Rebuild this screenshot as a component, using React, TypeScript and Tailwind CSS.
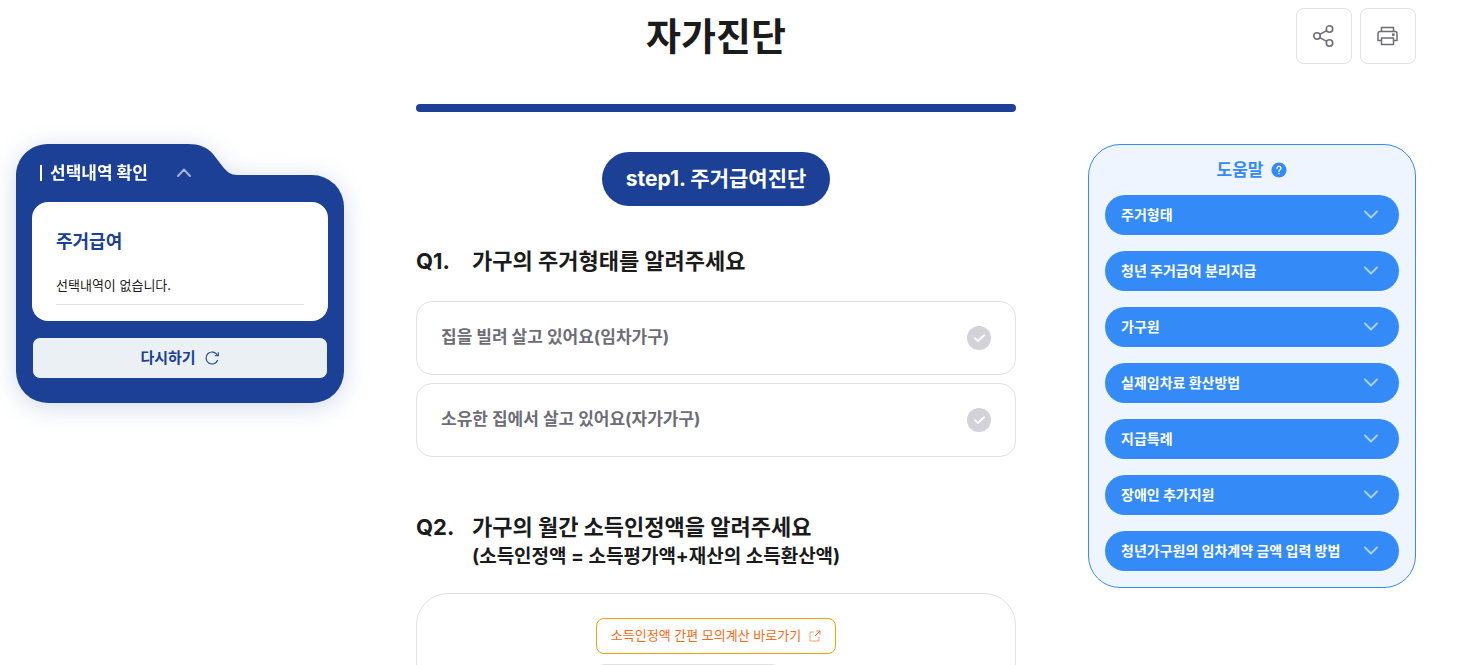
import React from 'react';

interface Option {
  value: string;
  label: string;
}

const housingOptions: Option[] = [
  { value: 'rent', label: '집을 빌려 살고 있어요(임차가구)' },
  { value: 'own', label: '소유한 집에서 살고 있어요(자가가구)' },
];

const helpTopics: string[] = [
  '주거형태',
  '청년 주거급여 분리지급',
  '가구원',
  '실제임차료 환산방법',
  '지급특례',
  '장애인 추가지원',
  '청년가구원의 임차계약 금액 입력 방법',
];

const Chevron: React.FC<{ up?: boolean }> = ({ up = false }) => (
  <svg className="w-4 h-4 shrink-0 opacity-60" viewBox="0 0 16 16" fill="none" stroke="white" strokeWidth="1.9" strokeLinecap="round" strokeLinejoin="round">
    <path d={up ? 'M2 11 8 4.5l6 6.5' : 'M2 4.5 8 10.5l6-6'} />
  </svg>
);

const ShareIcon = () => (
  <svg className="w-6 h-6" viewBox="0 0 24 24" fill="none" stroke="#6d6d76" strokeWidth="1.6">
    <circle cx="5" cy="12" r="3.2" />
    <circle cx="17.5" cy="5" r="3.2" />
    <circle cx="17.5" cy="19" r="3.2" />
    <path d="m7.8 10.4 6.9-3.8M7.8 13.6l6.9 3.8" />
  </svg>
);

const PrintIcon = () => (
  <svg className="w-6 h-6" viewBox="0 0 24 24" fill="none" stroke="#6d6d76" strokeWidth="1.5" strokeLinejoin="round">
    <path d="M5.5 7.5v-4h12v4" />
    <path d="M5.5 16.5h-3.5v-7a2 2 0 0 1 2-2h15a2 2 0 0 1 2 2v7h-3.5" />
    <path d="M5.5 14h12v6.500h-12z" />
    <circle cx="17.3" cy="10.8" r=".7" fill="#6d6d76" />
  </svg>
);

const Header = () => (
  <header className="grid grid-cols-[1fr_auto_1fr] items-center">
    <h1 className="col-start-2 text-[38px] leading-[54px] font-bold">자가진단</h1>
    <div className="flex justify-end gap-2">
      <button type="button" aria-label="공유하기" className="w-14 h-14 flex items-center justify-center rounded-lg border border-[#e2e2e4]">
        <ShareIcon />
      </button>
      <button type="button" aria-label="인쇄하기" className="w-14 h-14 flex items-center justify-center rounded-lg border border-[#e2e2e4]">
        <PrintIcon />
      </button>
    </div>
  </header>
);

const SelectionCard = () => (
  <aside className="w-82 mt-8 shrink-0 drop-shadow-[0_4px_12px_rgba(27,64,150,0.2)]">
    {/* Folder tab */}
    <svg className="block w-56 h-8 -mb-px" viewBox="0 0 224 32" fill="#1b4096">
      <path d="M0 32C0 14 14 0 32 0H172C183 0 191 3 197 10L207 23C211 28 215 31 221 31H224V32Z" />
    </svg>
    <div className="flex flex-col bg-[#1b4096] rounded-4xl rounded-tl-none px-4 pb-6">
      <div className="relative flex items-center gap-7 h-14 -mt-7 pb-1 pl-2 -mb-px">
        <h2 className="flex items-center gap-2 text-[17px] leading-6 font-bold text-white">
          <span className="w-0.5 h-4 bg-white"></span>
          선택내역 확인
        </h2>
        <button type="button" aria-label="선택내역 접기">
          <Chevron up />
        </button>
      </div>
      <div className="bg-white rounded-2xl px-6 pt-6 pb-4">
        <h3 className="text-lg leading-8 font-bold text-[#1b4096]">주거급여</h3>
        <p className="mt-4 pb-2 border-b border-[#e2e2e4] text-[13px] leading-[22px]">선택내역이 없습니다.</p>
      </div>
      <button type="button" className="w-full mt-4 border border-[#1b4096] h-[42px] flex items-center justify-center gap-2 rounded-lg bg-[#ebf0f5] text-[15px] font-bold text-[#1b4096]">
        다시하기
        <svg className="w-4 h-4" viewBox="0 0 16 16" fill="none" stroke="#1b4096" strokeWidth="1.1">
          <path d="M13.7 10A6 6 0 1 1 13.4 5.3" />
          <path d="M14.3 2.2v3.5h-3.5" />
        </svg>
      </button>
    </div>
  </aside>
);

const OptionCard: React.FC<{ option: Option }> = ({ option }) => (
  <label className="relative flex items-center justify-between h-[74px] px-6 rounded-2xl border border-[#e2e2e4] text-[17px] font-bold text-[#6d6d76]">
    {option.label}
    <input type="radio" name="housing" value={option.value} className="sr-only" />
    <svg className="w-6 h-6" viewBox="0 0 24 24" fill="none">
      <circle cx="12" cy="12" r="12" fill="#d2d2d8" />
      <path d="m8 12.2 3 2.8 6-5.8" stroke="white" strokeWidth="2" strokeLinecap="round" strokeLinejoin="round" />
    </svg>
  </label>
);

const Diagnosis = () => (
  <main className="w-150">
    <div className="w-full h-2 -mt-2 rounded-full bg-[#1b4096]"></div>
    <div className="flex justify-center mt-10">
      <p className="px-6 rounded-full bg-[#1b4096] text-[21px] leading-[54px] font-bold text-white">step1. 주거급여진단</p>
    </div>

    <section className="mt-[35px]">
      <h2 className="flex text-[22px] leading-10 font-bold">
        <span className="w-14">Q1.</span>
        가구의 주거형태를 알려주세요
      </h2>
      <div className="flex flex-col gap-2 mt-5">
        {housingOptions.map((option) => (
          <OptionCard key={option.value} option={option} />
        ))}
      </div>
    </section>

    <section className="mt-13">
      <h2 className="flex text-[22px] leading-9 font-bold">
        <span className="w-14">Q2.</span>
        <span>
          가구의 월간 소득인정액을 알려주세요
          <small className="block text-[19px] leading-6">(소득인정액 = 소득평가액+재산의 소득환산액)</small>
        </span>
      </h2>
      <div className="mt-6 px-6 pt-6 pb-10 rounded-4xl border border-[#e2e2e4]">
        <a href="#" className="w-60 h-9 mx-auto flex items-center justify-center gap-2 rounded-lg border border-[#f5a30a] text-[13px] text-[#fb6a14]">
          소득인정액 간편 모의계산 바로가기
          <svg className="w-3 h-3" viewBox="0 0 12 12" fill="none" stroke="#fb6a14" strokeWidth="0.9">
            <path d="M5 2H1v9h9V7" opacity=".7" />
            <path d="M7.5 1H11v3.5M11 1 6 6" />
          </svg>
        </a>
        <div className="w-60 mx-auto mt-[10px]">
          <input type="text" aria-label="월 소득인정액" className="block w-46 h-12 rounded-lg border border-[#e2e2e4] px-4" />
        </div>
      </div>
    </section>
  </main>
);

const HelpPanel = () => (
  <aside className="w-82 mt-8 shrink-0 self-start px-4 pt-1.5 pb-4 rounded-4xl border border-[#348bf7] bg-[#eff5ff]">
    <h2 className="flex items-center justify-center gap-2 mb-1.5 text-[17px] leading-[38px] font-bold text-[#348bf7]">
      도움말
      <svg className="w-4 h-4" viewBox="0 0 16 16" fill="none">
        <circle cx="8" cy="8" r="7.6" fill="#348bf7" />
        <path d="M6 6.5C6 5.2 6.8 4.4 8 4.4s2 .8 2 1.9C10 7.7 8 7.7 8 9.3" stroke="white" strokeWidth="1.3" strokeLinecap="round" />
        <circle cx="8" cy="11.5" r=".8" fill="white" />
      </svg>
    </h2>
    <ul className="flex flex-col gap-4">
      {helpTopics.map((topic) => (
        <li key={topic}>
          <button type="button" className="group w-full h-10 px-4 flex items-center justify-between rounded-full bg-[#348bf7] text-sm font-bold text-white">
            {topic}
            <span className="mr-1 flex">
              <Chevron />
            </span>
          </button>
        </li>
      ))}
    </ul>
  </aside>
);

export default function App() {
  return (
    <div className="h-screen overflow-hidden bg-white pl-4 pr-[43px] pt-2 font-['Inter','Noto_Sans_CJK_KR',sans-serif] text-[#1b1b1c]">
      <Header />
      <div className="flex justify-between gap-8 mt-12">
        <SelectionCard />
        <Diagnosis />
        <HelpPanel />
      </div>
    </div>
  );
}
